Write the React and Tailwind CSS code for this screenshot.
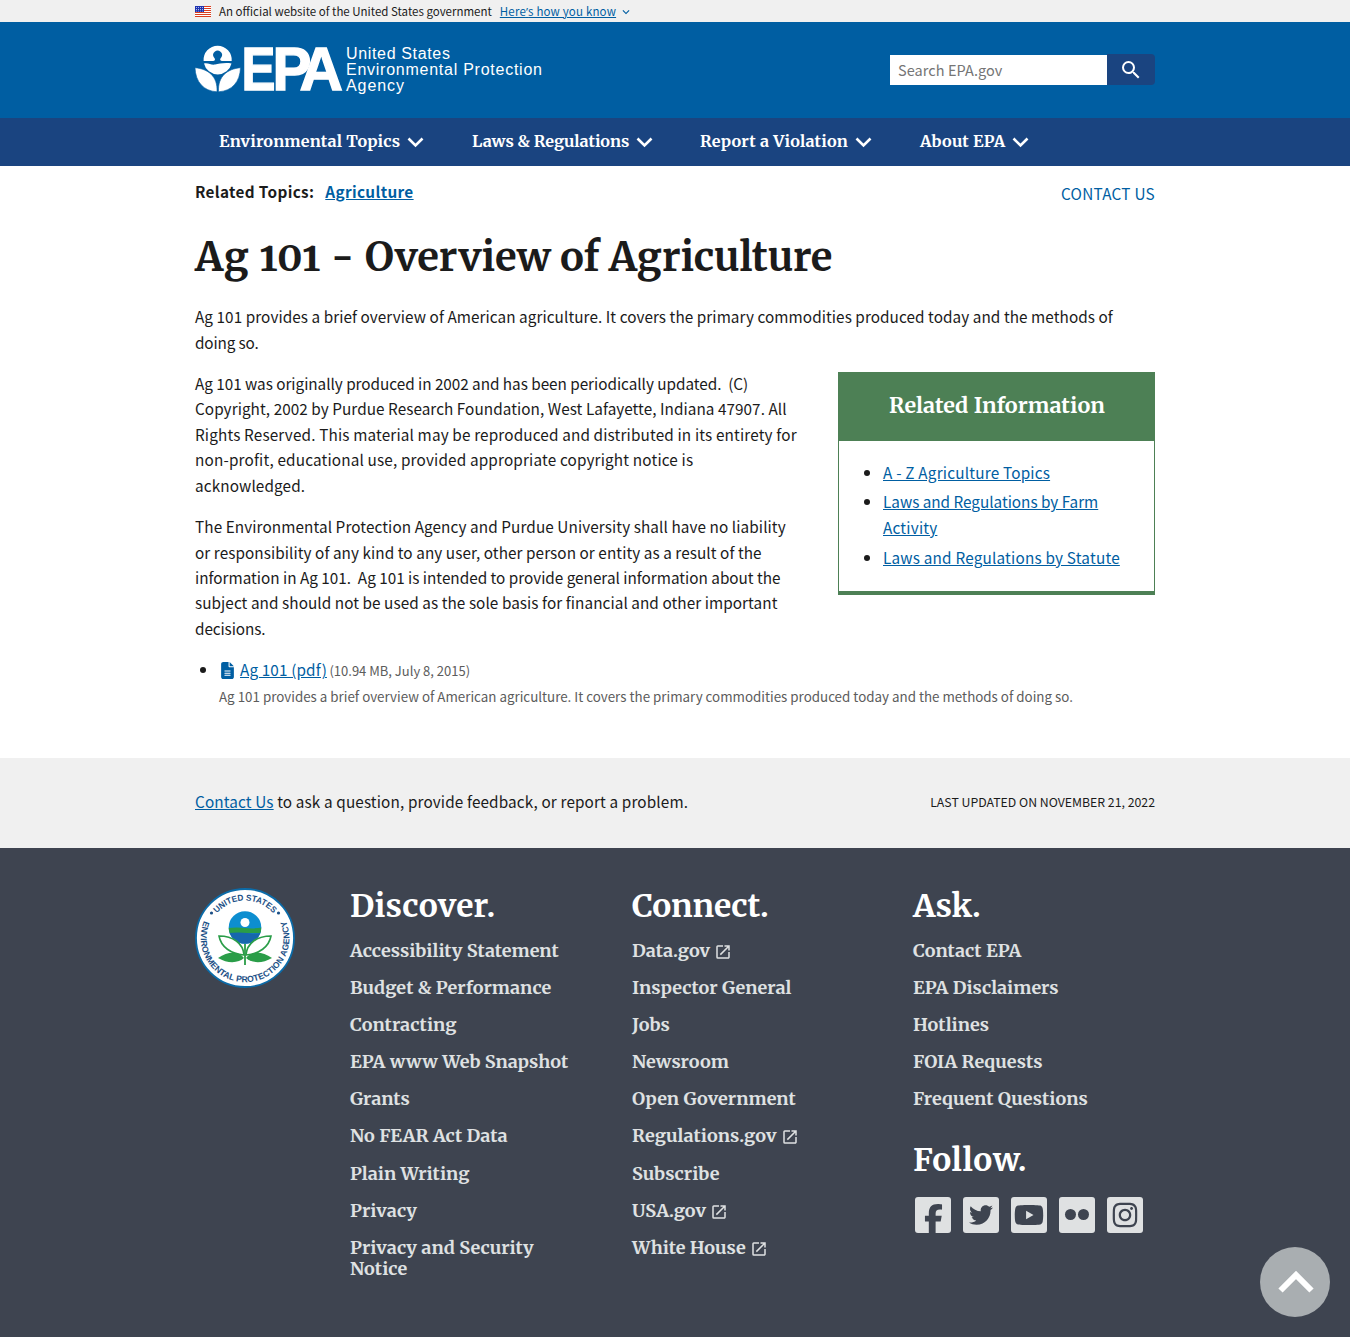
import { FaFacebookF, FaTwitter, FaYoutube, FaInstagram, FaFileLines } from "react-icons/fa6";
import { MdOpenInNew, MdSearch, MdExpandMore } from "react-icons/md";

const sans = "font-['Noto_Sans_CJK_SC','Noto_Sans',sans-serif]";
const serif = "font-['Merriweather','DejaVu_Serif_Condensed',serif] font-bold";
const link = "text-[#005ea2] underline";

function Flag() {
  return (
    <svg className="mr-2 h-[11px] w-4" viewBox="0 0 16 11">
      <rect width="16" height="11" fill="#fff" />
      {[0, 2, 4, 6, 8, 10].map((y) => (
        <rect key={y} y={y} width="16" height="1" fill="#db3e1f" />
      ))}
      <rect width="9" height="6" fill="#1e33b1" />
      {[1, 3, 5, 7].map((x) => (
        <g key={x} fill="#fff">
          <rect x={x} y="1" width=".8" height=".8" />
          <rect x={x} y="3" width=".8" height=".8" />
          <rect x={x} y="4.8" width=".8" height=".6" />
        </g>
      ))}
    </svg>
  );
}

function Logo() {
  return (
    <svg className="h-[54px] w-[350px] overflow-visible" viewBox="0 0 350 54" fill="#fff">
      <path d="M8.600 17A14.100 14.100 0 1 1 36.700 17L27 17C24.500 16.500 25 15 26.200 13.500A4.400 4.400 0 1 0 19 13.500C20.200 15 20.700 16.500 18.200 17Z" />
      <path d="M9 19.400C14 18.600 16 21.400 20 20.600S29 18.400 36.500 19.400A14.100 14.100 0 0 1 9 19.400Z" />
      <path d="M0 23.700C13 25 22.800 32 22 47.800C8.500 47 0.500 38 0 23.700Z" stroke="#005ea2" strokeWidth=".6" />
      <path d="M45.500 23.700C32.500 25 22.700 32 23.500 47.800C37 47 45 38 45.500 23.700Z" stroke="#005ea2" strokeWidth=".6" />
      <text fontFamily="'Liberation Sans', Arial, sans-serif" fontWeight="700" fontSize="62" stroke="#fff" strokeWidth="1.400" y="46.300">
        <tspan x="46.500" textLength="34" lengthAdjust="spacingAndGlyphs">E</tspan>
        <tspan x="77.500" textLength="39" lengthAdjust="spacingAndGlyphs">P</tspan>
        <tspan x="104.500" textLength="43.500" lengthAdjust="spacingAndGlyphs">A</tspan>
      </text>
      <g fontFamily="'Liberation Sans', Arial, sans-serif" fontSize="16">
        <text x="151" y="14.600" textLength="104">United States</text>
        <text x="151" y="30.500" textLength="196">Environmental Protection</text>
        <text x="151" y="47" textLength="58">Agency</text>
      </g>
    </svg>
  );
}

function Seal() {
  return (
    <svg className="h-[102px] w-[102px]" viewBox="-51 -51 102 102">
      <circle r="49" fill="#fff" stroke="#0b6ba8" strokeWidth="1.800" />
      <defs>
        <path id="sealTop" d="M-37.500 0A37.500 37.500 0 0 1 37.500 0" />
        <path id="sealBottom" d="M-40.500 -18A44.300 44.300 0 1 0 40.500 -18" />
      </defs>
      <g fill="#1b4f86" fontFamily="'Liberation Sans', Arial, sans-serif" fontWeight="700" fontSize="8.600">
        <text textAnchor="middle">
          <textPath href="#sealTop" startOffset="50%" textLength="64" lengthAdjust="spacingAndGlyphs">UNITED STATES</textPath>
        </text>
        <text textAnchor="middle">
          <textPath href="#sealBottom" startOffset="50%" textLength="174">ENVIRONMENTAL PROTECTION AGENCY</textPath>
        </text>
      </g>
      <circle cx="-33.500" cy="-25" r="1.600" fill="#1b4f86" />
      <circle cx="33.500" cy="-25" r="1.600" fill="#1b4f86" />
      <clipPath id="globe"><circle cy="-10.500" r="16.300" /></clipPath>
      <g clipPath="url(#globe)">
        <rect x="-17" y="-27" width="34" height="34" fill="#0d8ed0" />
        <path d="M-17 -10Q-8 -11 0 -10T17 -10.500V-5H-17Z" fill="#2a9d48" />
        <path d="M-17 -5Q-6 -6 2 -5T17 -5.500V7H-17Z" fill="#1667ad" />
      </g>
      <circle cy="-15.500" r="4.500" fill="#fff" />
      <g fill="#fff" stroke="#2a9d48" strokeWidth="1.600">
        <path d="M-1 17C-2 5 -12 -2 -26 -2C-24 9 -14 16 -1 17Z" />
        <path d="M1 17C2 5 12 -2 26 -2C24 9 14 16 1 17Z" />
      </g>
      <g fill="#2a9d48">
        <path d="M-1 20C-6 13 -17 13 -27 20C-17 26 -6 25 -1 20Z" />
        <path d="M1 20C6 13 17 13 27 20C17 26 6 25 1 20Z" />
        <rect x="-.9" y="6" width="1.800" height="21" />
      </g>
    </svg>
  );
}

function NavItem({ text, width, spacing }) {
  return (
    <a className={`flex items-center ${width} ${spacing}`}>
      {text}
      <svg className="ml-[6.500px] mt-[2px] h-[11px] w-[17px]" viewBox="0 0 17 11" fill="none" stroke="#fff" strokeWidth="2.600">
        <path d="M1.500 1.500L8.500 8.500L15.500 1.500" />
      </svg>
    </a>
  );
}

function Lines({ items }) {
  return (
    <p className="mb-4 whitespace-pre">
      {items.map(([t, spacing = ""]) => (
        <span key={t} className={`block ${spacing}`}>{t}</span>
      ))}
    </p>
  );
}

function FooterColumn({ title, spacing, items, className = "", children }) {
  return (
    <section className={className}>
      <h2 className={`${serif} text-[31.800px] leading-[40px] text-white ${spacing}`}>{title}</h2>
      <ul className={`${serif} mt-[14.200px] flex flex-col gap-4 text-[18px] leading-[21.120px] tracking-[0.050px] text-[#dfe1e2]`}>
        {items.map(([t, ext]) => (
          <li key={t} className="flex items-center whitespace-pre-line">
            {t}
            {ext && <MdOpenInNew className="ml-1 mt-[3px] h-[18px] w-[18px]" />}
          </li>
        ))}
      </ul>
      {children}
    </section>
  );
}

const discover = [["Accessibility Statement"], ["Budget & Performance"], ["Contracting"], ["EPA www Web Snapshot"], ["Grants"], ["No FEAR Act Data"], ["Plain Writing"], ["Privacy"], ["Privacy and Security\nNotice"]];
const connect = [["Data.gov", 1], ["Inspector General"], ["Jobs"], ["Newsroom"], ["Open Government"], ["Regulations.gov", 1], ["Subscribe"], ["USA.gov", 1], ["White House", 1]];
const ask = [["Contact EPA"], ["EPA Disclaimers"], ["Hotlines"], ["FOIA Requests"], ["Frequent Questions"]];

const intro = [
  ["Ag 101 provides a brief overview of American agriculture. It covers the primary commodities produced today and the methods of"],
  ["doing so.", "mt-px -mb-px tracking-[-0.150px]"],
];
const copyright = [
  ["Ag 101 was originally produced in 2002 and has been periodically updated.  (C)", "tracking-[-0.030px]"],
  ["Copyright, 2002 by Purdue Research Foundation, West Lafayette, Indiana 47907. All", "tracking-[0.055px]"],
  ["Rights Reserved. This material may be reproduced and distributed in its entirety for", "tracking-[0.150px]"],
  ["non-profit, educational use, provided appropriate copyright notice is", "tracking-[0.160px]"],
  ["acknowledged.", "tracking-[0.120px]"],
];
const liability = [
  ["The Environmental Protection Agency and Purdue University shall have no liability", "tracking-[0.090px]"],
  ["or responsibility of any kind to any user, other person or entity as a result of the"],
  ["information in Ag 101.  Ag 101 is intended to provide general information about the", "tracking-[-0.006px]"],
  ["subject and should not be used as the sole basis for financial and other important"],
  ["decisions.", "tracking-[-0.100px]"],
];

function Social({ children }) {
  return <a className="flex h-9 w-9 items-center justify-center overflow-hidden rounded-[3px] bg-[#dfe1e2] text-[#3e4450]">{children}</a>;
}

export default function App() {
  return (
    <div className={`${sans} h-[1337px] overflow-hidden bg-white text-[15.300px] leading-[25.440px] tracking-[0.067px] text-[#1b1b1b]`}>
      <div className="h-[22px] bg-[#f0f0f0]">
        <div className="mx-auto flex h-[22px] w-[960px] items-center text-[11.500px] leading-[22px] tracking-normal">
          <Flag />
          <span className="mr-2">An official website of the United States government</span>
          <a className={`${link} tracking-[0.170px]`}>Here<span className="font-['Open_Sans','Noto_Sans',sans-serif]">’</span>s how you know</a>
          <MdExpandMore className="ml-[3px] mt-px h-[14px] w-[14px] text-[#005ea2]" />
        </div>
      </div>

      <header className="h-24 bg-[#005ea2]">
        <div className="mx-auto flex w-[960px] justify-between">
          <div className="pt-[22px]"><Logo /></div>
          <form className="mt-8 flex h-[31px] w-[265px]">
            <div className="mt-px h-[30px] w-[217px] bg-white pl-2 text-[14.500px] leading-[30px] text-[#757575]">Search EPA.gov</div>
            <button type="button" className="flex w-12 items-center justify-center rounded-r-[4px] bg-[#1a4480] text-white">
              <MdSearch className="h-6 w-6" />
            </button>
          </form>
        </div>
      </header>

      <nav className="h-12 bg-[#1a4480]">
        <div className={`${serif} mx-auto flex h-[46px] w-[960px] pl-6 text-[16.200px] leading-6 text-white`}>
          <NavItem text="Environmental Topics" width="w-[253px]" spacing="tracking-[0.180px]" />
          <NavItem text="Laws & Regulations" width="w-[228px]" spacing="tracking-[-0.040px]" />
          <NavItem text="Report a Violation" width="w-[220px]" spacing="tracking-[0.220px]" />
          <NavItem text="About EPA" width="w-[120px]" spacing="tracking-[0.200px]" />
        </div>
      </nav>

      <main className="mx-auto h-[592px] w-[960px] pt-[13px]">
        <div className="flex h-10 justify-between">
          <div className="font-bold tracking-[0.350px]">
            Related Topics:<a className={`${link} ml-[11px]`}>Agriculture</a>
          </div>
          <a className="mt-[2px] tracking-[0.270px] text-[#005ea2]">CONTACT US</a>
        </div>
        <h1 className={`${serif} mt-3 h-[73px] text-[40px] leading-[52px] tracking-[-0.150px] oldstyle-nums`}>
          <span className="tracking-[0.580px]">Ag 101 - </span>Overview of Agriculture
        </h1>
        <Lines items={intro} />
        <div className="flex justify-between">
          <div>
            <Lines items={copyright} />
            <Lines items={liability} />
          </div>
          <aside className="mt-px h-[223px] w-[317px] border border-b-4 border-[#4d8055]">
            <h2 className={`${serif} h-[68px] bg-[#4d8055] pl-px text-center text-[21.500px] leading-[66px] text-white`}>Related Information</h2>
            <ul className="ml-11 mt-[19px] list-disc tracking-[0.200px] marker:text-[#1b1b1b]">
              <li><a className={link}>A - Z Agriculture Topics</a></li>
              <li className="mt-1"><a className={link}><span className="tracking-[-0.014px]">Laws and Regulations by Farm</span><br />Activity</a></li>
              <li className="mt-[5px]"><a className={link}>Laws and Regulations by Statute</a></li>
            </ul>
          </aside>
        </div>
        <ul className="ml-6 list-disc">
          <li>
            <FaFileLines className="mr-[6px] ml-[2px] inline h-[17px] w-[13px] align-[-3px] text-[#005ea2]" />
            <a className={`${link} tracking-[0.130px]`}>Ag 101 (pdf)</a>
            <span className="ml-[2.500px] text-[13px] tracking-normal text-[#5c5c5c]">(10.94 MB, July 8, 2015)</span>
            <div className="text-[13.360px] tracking-normal text-[#5c5c5c]">Ag 101 provides a brief overview of American agriculture. It covers the primary commodities produced today and the methods of doing so.</div>
          </li>
        </ul>
      </main>

      <div className="h-[90px] bg-[#f0f0f0]">
        <div className="mx-auto flex h-[88px] w-[960px] items-center justify-between">
          <p className="tracking-[0.130px]"><a className={link}>Contact Us</a> to ask a question, provide feedback, or report a problem.</p>
          <p className="mt-[2px] text-[12.300px] tracking-normal">LAST UPDATED ON NOVEMBER 21, 2022</p>
        </div>
      </div>

      <footer className="h-[489px] bg-[#3e4450] pt-[37.600px] tracking-normal">
        <div className="mx-auto flex w-[960px]">
          <div className="-ml-px mt-[1.400px] w-[156px]"><Seal /></div>
          <FooterColumn title="Discover." spacing="tracking-[0.250px]" items={discover} className="w-[282px]" />
          <FooterColumn title="Connect." spacing="tracking-[-0.200px]" items={connect} className="w-[281px]" />
          <FooterColumn title="Ask." spacing="tracking-normal" items={ask}>
            <h2 className={`${serif} mt-[30.200px] text-[31.800px] leading-[40px] tracking-[0.550px] text-white`}>Follow.</h2>
            <div className="ml-[2px] mt-[17px] flex gap-3">
              <Social><FaFacebookF className="mt-2 h-[30px] w-[19px]" /></Social>
              <Social><FaTwitter className="h-6 w-6" /></Social>
              <Social><FaYoutube className="h-[30px] w-[30px]" /></Social>
              <Social><span className="flex gap-[2px]"><i className="h-[11px] w-[11px] rounded-full bg-[#3e4450]" /><i className="h-[11px] w-[11px] rounded-full bg-[#3e4450]" /></span></Social>
              <Social><FaInstagram className="h-7 w-7" /></Social>
            </div>
          </FooterColumn>
        </div>
      </footer>

      <a className="fixed bottom-5 right-5 flex h-[70px] w-[70px] items-center justify-center rounded-full bg-[#a9aeb1]">
        <svg className="ml-[2px] h-[24px] w-[36px]" viewBox="0 0 36 24" fill="none" stroke="#fff" strokeWidth="6">
          <path d="M2.500 20.500L18 5L33.500 20.500" />
        </svg>
      </a>
    </div>
  );
}
